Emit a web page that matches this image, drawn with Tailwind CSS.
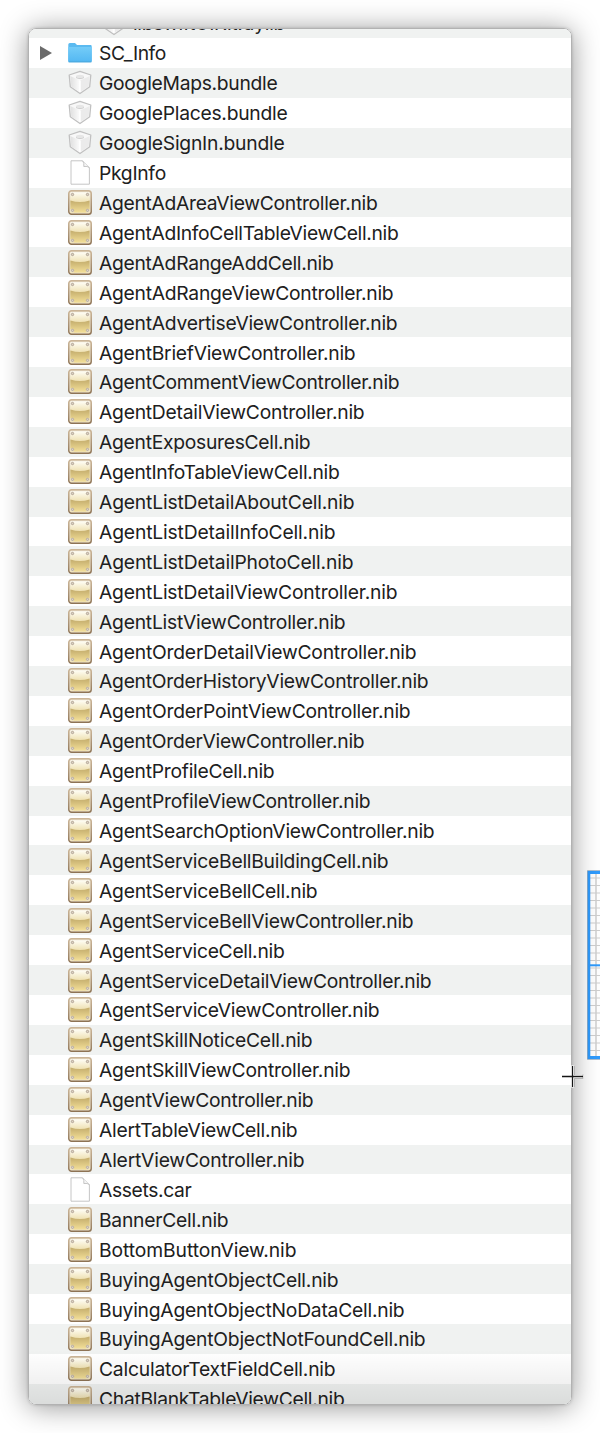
<!DOCTYPE html>
<html lang="en">
<head>
<meta charset="utf-8">
<title>Package contents</title>
<script src="https://cdn.jsdelivr.net/npm/@tailwindcss/browser@4"></script>
</head>
<body class="relative h-[1433px] w-[600px] overflow-hidden bg-white font-['Inter',sans-serif] text-[19.3px] text-[#202020]">
<svg width="0" height="0" class="absolute">
  <defs>
    <linearGradient id="gold" x1="0" y1="0" x2="0" y2="1"><stop offset="0" stop-color="#fffef6"/><stop offset=".5" stop-color="#eee0b0"/></linearGradient>
    <linearGradient id="brass" x1="0" y1="0" x2="0" y2="1"><stop offset="0" stop-color="#c3ac6c"/><stop offset="1" stop-color="#f3df98"/></linearGradient>
    <linearGradient id="rim" x1="0" y1="0" x2="0" y2="1"><stop offset="0" stop-color="#cbb597"/><stop offset="1" stop-color="#8d7355"/></linearGradient>
    <linearGradient id="blue" x1="0" y1="0" x2="0" y2="1"><stop offset="0" stop-color="#74ccf8"/><stop offset="1" stop-color="#54b8f2"/></linearGradient>
    <linearGradient id="side" x1="0" y1="0" x2="1" y2="0"><stop offset="0" stop-color="#e0e0e0"/><stop offset="1" stop-color="#fcfcfc"/></linearGradient>
    <symbol id="nib" viewBox="0 0 24 25">
      <rect x=".75" y=".75" width="22.5" height="23.5" rx="2.8" fill="#eadfca" stroke="url(#rim)" stroke-width="1.4"/>
      <rect x="2.400" y="2.300" width="19.200" height="20.200" rx="1" fill="url(#gold)"/>
      <path d="M2.400 10.500Q12 13.500 21.600 10.500V22.500H2.400Z" fill="url(#brass)"/>
      <g fill="#f4efe4"><circle cx="4.200" cy="4.200" r="1.900"/><circle cx="19.800" cy="4.200" r="1.900"/><circle cx="4.200" cy="20.700" r="1.900"/><circle cx="19.800" cy="20.700" r="1.900"/></g>
      <g fill="#ddd4c6" stroke="#a39480" stroke-width=".7"><circle cx="4.500" cy="4.500" r="1.200"/><circle cx="19.500" cy="4.500" r="1.200"/><circle cx="4.500" cy="20.400" r="1.200"/><circle cx="19.500" cy="20.400" r="1.200"/></g>
    </symbol>
    <symbol id="bundle" viewBox="0 0 24 25">
      <path d="M12 1.300 22.800 5 21.700 16.800 12 23.500 2.300 16.800 1.200 5Z" fill="#f8f8f8" stroke="#c0c0c0" stroke-width="1.300" stroke-linejoin="round"/>
      <path d="M2.300 6 12 10.500V22.200L3.300 16.500Z" fill="url(#side)"/>
      <path d="M21.700 6 12 10.500V22.200L20.700 16.500Z" fill="#ebebeb"/>
      <path d="M12 10.500V22" stroke="#fff" stroke-width="1.500"/>
      <path d="M8 6.500V8Q12 10.200 16 8V6.500Z" fill="#cdcdcd"/><ellipse cx="12" cy="6.400" rx="4" ry="1.600" fill="#e6e6e6"/>
    </symbol>
    <symbol id="page" viewBox="0 0 24 25">
      <path d="M3 .8H14.500L21.400 7.700V24.200H3Z" fill="#fff" stroke="#c0c0c0" stroke-width=".9"/>
      <path d="M14.500 .8Q16.500 3 15.800 6.500Q19.500 5.800 21.400 7.700" fill="#f5f5f5" stroke="#c0c0c0" stroke-width=".9"/>
    </symbol>
    <symbol id="folder" viewBox="0 0 24 25">
      <path d="M.3 4.500Q.3 3 1.800 3H7L9 5H22.500Q23.700 5 23.700 6.200V21Q23.700 22.200 22.500 22.200H1.500Q.3 22.200 .3 21Z" fill="#5bbaf0"/>
      <path d="M.3 7H23.700V20.500Q23.700 21.700 22.500 21.700H1.500Q.3 21.700 .3 20.500Z" fill="url(#blue)"/>
      <path d="M.5 21.900H23.500" stroke="#459fd5" stroke-width=".8"/>
    </symbol>
  </defs>
</svg>

<svg class="absolute left-[587px] top-[870px]" width="13" height="190">
  <rect width="13" height="190" fill="#fff"/>
  <g id="grid" stroke="#cfcfcf" stroke-width="1"></g>
  <path d="M9 2V188" stroke="#cfcfcf" stroke-width="1.500"/>
  <path d="M13 2.500H1.800V187.500H13" fill="none" stroke="#2f9bfd" stroke-width="3"/>
  <path d="M1 95.300H13" stroke="#2f9bfd" stroke-width="2"/>
  <path d="M13 .5H.5V189.500H13" fill="none" stroke="#8ba5bd" stroke-width=".7"/>
</svg>

<main class="relative ml-[28px] mt-[28px] h-[1377px] w-[544px] rounded-[8px] shadow-[0_0_3px_rgba(0,0,0,0.18),0_2px_28px_rgba(0,0,0,0.42)]">
  <div class="h-full overflow-hidden rounded-[8px] border border-[#b2b2b2] bg-white">
    <div class="flex h-[9px] items-end bg-[#f0f2f1] pl-[73px]">
      <svg class="mb-[2px] mr-[7px] h-[25px] w-6 shrink-0"><use href="#bundle"/></svg>
      <span class="leading-[30px] whitespace-nowrap" data-w="152">libswiftUIKit.dylib</span>
    </div>
    <div id="list"></div>
  </div>
  <div class="absolute inset-x-px bottom-px h-[54px] rounded-b-[7px] bg-gradient-to-b from-transparent to-black/9"></div>
</main>

<svg class="absolute left-[560px] top-[1064px]" width="26" height="26">
  <path d="M12.500 1.500V23.500M2 12.500H24" stroke="#fff" stroke-width="3.200"/>
  <path d="M14.500 2V11M23 10.500V14.500H14.500V23" fill="none" stroke="#aaa" stroke-width=".8"/>
  <path d="M12.500 2V23M2 12.500H23" stroke="#151515" stroke-width="1.300"/>
</svg>

<script>
const rows = [['SC_Info',165.500],['GoogleMaps.bundle',277],['GooglePlaces.bundle',287],['GoogleSignIn.bundle',284],['PkgInfo',165.500],
['AgentAdAreaViewController.nib',377],['AgentAdInfoCellTableViewCell.nib',398],['AgentAdRangeAddCell.nib',333],['AgentAdRangeViewController.nib',393],['AgentAdvertiseViewController.nib',397],['AgentBriefViewController.nib',355],['AgentCommentViewController.nib',399],['AgentDetailViewController.nib',364],['AgentExposuresCell.nib',310],['AgentInfoTableViewCell.nib',339],['AgentListDetailAboutCell.nib',354],['AgentListDetailInfoCell.nib',335],['AgentListDetailPhotoCell.nib',353],['AgentListDetailViewController.nib',397],['AgentListViewController.nib',345],['AgentOrderDetailViewController.nib',416],['AgentOrderHistoryViewController.nib',428],['AgentOrderPointViewController.nib',410],['AgentOrderViewController.nib',364],['AgentProfileCell.nib',274],['AgentProfileViewController.nib',370],['AgentSearchOptionViewController.nib',434],['AgentServiceBellBuildingCell.nib',388],['AgentServiceBellCell.nib',317],['AgentServiceBellViewController.nib',413],['AgentServiceCell.nib',284],['AgentServiceDetailViewController.nib',431],['AgentServiceViewController.nib',379],['AgentSkillNoticeCell.nib',312],['AgentSkillViewController.nib',350],['AgentViewController.nib',313],['AlertTableViewCell.nib',297],['AlertViewController.nib',304],['Assets.car',191],['BannerCell.nib',228],['BottomButtonView.nib',296],['BuyingAgentObjectCell.nib',338],['BuyingAgentObjectNoDataCell.nib',404],['BuyingAgentObjectNotFoundCell.nib',425],['CalculatorTextFieldCell.nib',335],['ChatBlankTableViewCell.nib',344]];
const icon = n => n === 'SC_Info' ? 'folder' : n.endsWith('.bundle') ? 'bundle' : n.endsWith('.nib') ? 'nib' : 'page';
document.getElementById('list').innerHTML = rows.map(([n, r], i) =>
  `<div class="flex h-[29.92px] items-center ${i % 2 ? 'bg-[#f0f2f1]' : 'bg-white'}">
    <span class="flex w-[39px] shrink-0 pl-[11px]">${i ? '' : '<svg width="12" height="14"><path d="M0 0L12 7L0 14Z" fill="#6b6b6b"/></svg>'}</span>
    <svg class="mr-[7px] h-[25px] w-6 shrink-0"><use href="#${icon(n)}"/></svg>
    <span class="whitespace-nowrap pt-px leading-[30px]" data-w="${r - 98.6}">${n}</span>
  </div>`).join('');
const ctx = document.createElement('canvas').getContext('2d');
ctx.font = '19.3px Inter';
document.querySelectorAll('[data-w]').forEach(s => {
  const gap = (s.dataset.w - ctx.measureText(s.textContent).width) / s.textContent.length;
  s.style.letterSpacing = gap + 'px';
});
document.getElementById('grid').innerHTML = Array.from({length: 24}, (_, i) => `<path d="M3 ${8 + i * 7.5}H13"/>`).join('');
</script>
</body>
</html>
